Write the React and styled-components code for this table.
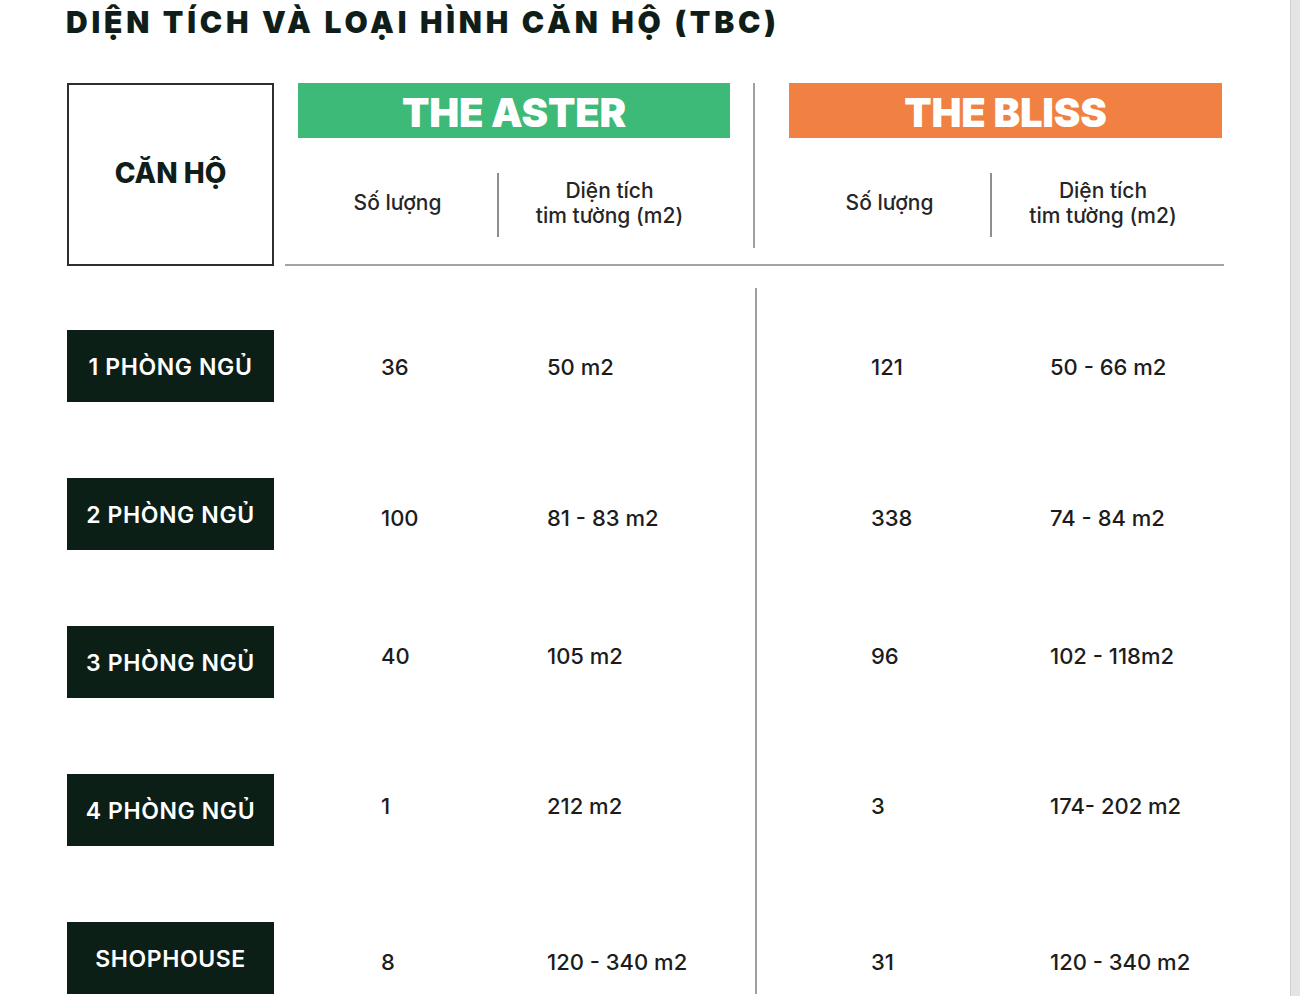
import React from 'react';
import styled, { createGlobalStyle } from 'styled-components';

const GlobalStyle = createGlobalStyle`
  html, body {
    margin: 0;
    padding: 0;
    background: #ffffff;
  }
  body {
    font-family: Inter, "Noto Sans", sans-serif;
    color: #1c1c1c;
  }
`;

const rows = [
  { label: '1 PHÒNG NGỦ', aster: ['36', '50 m2'], bliss: ['121', '50 - 66 m2'], shift: 1 },
  { label: '2 PHÒNG NGỦ', aster: ['100', '81 - 83 m2'], bliss: ['338', '74 - 84 m2'], shift: 4 },
  { label: '3 PHÒNG NGỦ', aster: ['40', '105 m2'], bliss: ['96', '102 - 118m2'], shift: -6 },
  { label: '4 PHÒNG NGỦ', aster: ['1', '212 m2'], bliss: ['3', '174- 202 m2'], shift: -4 },
  { label: 'SHOPHOUSE', aster: ['8', '120 - 340 m2'], bliss: ['31', '120 - 340 m2'], shift: 4 },
];

const Page = styled.div`
  display: flex;
  width: 1300px;
  height: 996px;
  overflow: hidden;
`;

const Main = styled.main`
  flex: 1;
  padding-left: 67px;
`;

const Strip = styled.div`
  width: 9px;
  background: #e4e4e4;
  border-left: 1px solid #cfcfcf;
`;

const Title = styled.h1`
  margin: 4px 0 0 -1px;
  font-family: Inter, sans-serif;
  font-weight: 900;
  font-size: 30px;
  line-height: 36px;
  letter-spacing: 3.8px;
  color: #0f1e19;
  white-space: nowrap;
`;

const Header = styled.div`
  display: flex;
  margin-top: 43px;
  height: 183px;
`;

const CornerBox = styled.div`
  width: 207px;
  box-sizing: border-box;
  border: 2px solid #2e2e2e;
  display: flex;
  align-items: center;
  justify-content: center;
  padding-bottom: 4px;
  font-family: Inter, sans-serif;
  font-weight: 800;
  font-size: 28px;
  color: #0f1e19;
`;

const HeaderRight = styled.div`
  margin-left: 11px;
  width: 939px;
  box-sizing: border-box;
  padding-left: 13px;
  border-bottom: 2px solid #a3a3a3;
  display: flex;
  align-items: flex-start;
`;

const Group = styled.div`
  width: ${(p) => p.$width}px;
  display: flex;
  flex-direction: column;
`;

const Banner = styled.div`
  height: 55px;
  background: ${(p) => p.$color};
  color: #ffffff;
  display: flex;
  align-items: center;
  justify-content: center;
  padding-top: 3px;
  box-sizing: border-box;
  font-family: Inter, sans-serif;
  font-weight: 900;
  font-size: 40px;
  letter-spacing: -0.2px;
`;

const SubRow = styled.div`
  margin-top: 35px;
  height: 64px;
  display: flex;
`;

const SubCell = styled.div`
  width: ${(p) => (p.$width ? `${p.$width}px` : 'auto')};
  flex: ${(p) => (p.$width ? 'none' : 1)};
  display: flex;
  align-items: center;
  justify-content: center;
  text-align: center;
  padding-bottom: ${(p) => p.$pb || 0}px;
  padding-right: ${(p) => p.$pr || 0}px;
  font-family: Inter, sans-serif;
  font-weight: 500;
  font-size: 21px;
  line-height: 25px;
  color: #262626;
  border-left: ${(p) => (p.$rule ? '2px solid #8e8e8e' : 'none')};
`;

const SplitRule = styled.div`
  width: 2px;
  height: 165px;
  background: #a0a0a0;
  margin: 0 34px 0 23px;
`;

const Body = styled.div`
  margin-top: 22px;
`;

const Row = styled.div`
  display: grid;
  grid-template-columns: 207px 481px 1fr;
  height: ${(p) => p.$height}px;
`;

const Label = styled.div`
  margin-top: ${(p) => (p.$first ? 42 : 38)}px;
  height: 72px;
  background: #0c1f16;
  color: #ffffff;
  display: flex;
  align-items: center;
  justify-content: center;
  padding-top: 1px;
  box-sizing: border-box;
  font-family: Inter, sans-serif;
  font-weight: 600;
  font-size: 23px;
  letter-spacing: 0.6px;
  white-space: nowrap;
`;

const ValueGroup = styled.div`
  padding-top: ${(p) => (p.$first ? 42 : 38)}px;
  padding-left: ${(p) => p.$indent}px;
  border-left: ${(p) => (p.$rule ? '2px solid #a0a0a0' : 'none')};
`;

const ValueGrid = styled.div`
  display: grid;
  grid-template-columns: ${(p) => p.$first}px 1fr;
  height: 72px;
  align-items: center;
  transform: translateY(${(p) => p.$shift}px);
`;

const Value = styled.span`
  font-family: Inter, sans-serif;
  font-weight: 500;
  font-size: 22px;
  color: #1c1c1c;
`;

const rowHeight = (i) => (i === 0 ? 152 : i === rows.length - 1 ? 102 : 148);

export default function App() {
  return (
    <>
      <GlobalStyle />
      <Page>
        <Main>
          <Title>DIỆN TÍCH VÀ LOẠI HÌNH CĂN HỘ (TBC)</Title>
          <Header>
            <CornerBox>CĂN HỘ</CornerBox>
            <HeaderRight>
              <Group $width={432}>
                <Banner $color="#3dba77">THE ASTER</Banner>
                <SubRow>
                  <SubCell $width={199} $pb={6}>Số lượng</SubCell>
                  <SubCell $rule $pr={10} $pb={4}>
                    Diện tích
                    <br />
                    tim tường (m2)
                  </SubCell>
                </SubRow>
              </Group>
              <SplitRule />
              <Group $width={433}>
                <Banner $color="#f08142">THE BLISS</Banner>
                <SubRow>
                  <SubCell $width={201} $pb={6}>Số lượng</SubCell>
                  <SubCell $rule $pr={8} $pb={4}>
                    Diện tích
                    <br />
                    tim tường (m2)
                  </SubCell>
                </SubRow>
              </Group>
            </HeaderRight>
          </Header>
          <Body>
            {rows.map((r, i) => (
              <Row key={r.label} $height={rowHeight(i)}>
                <Label $first={i === 0}>{r.label}</Label>
                <ValueGroup $first={i === 0} $indent={107}>
                  <ValueGrid $first={166} $shift={r.shift}>
                    <Value>{r.aster[0]}</Value>
                    <Value>{r.aster[1]}</Value>
                  </ValueGrid>
                </ValueGroup>
                <ValueGroup $first={i === 0} $indent={114} $rule>
                  <ValueGrid $first={179} $shift={r.shift}>
                    <Value>{r.bliss[0]}</Value>
                    <Value>{r.bliss[1]}</Value>
                  </ValueGrid>
                </ValueGroup>
              </Row>
            ))}
          </Body>
        </Main>
        <Strip />
      </Page>
    </>
  );
}
